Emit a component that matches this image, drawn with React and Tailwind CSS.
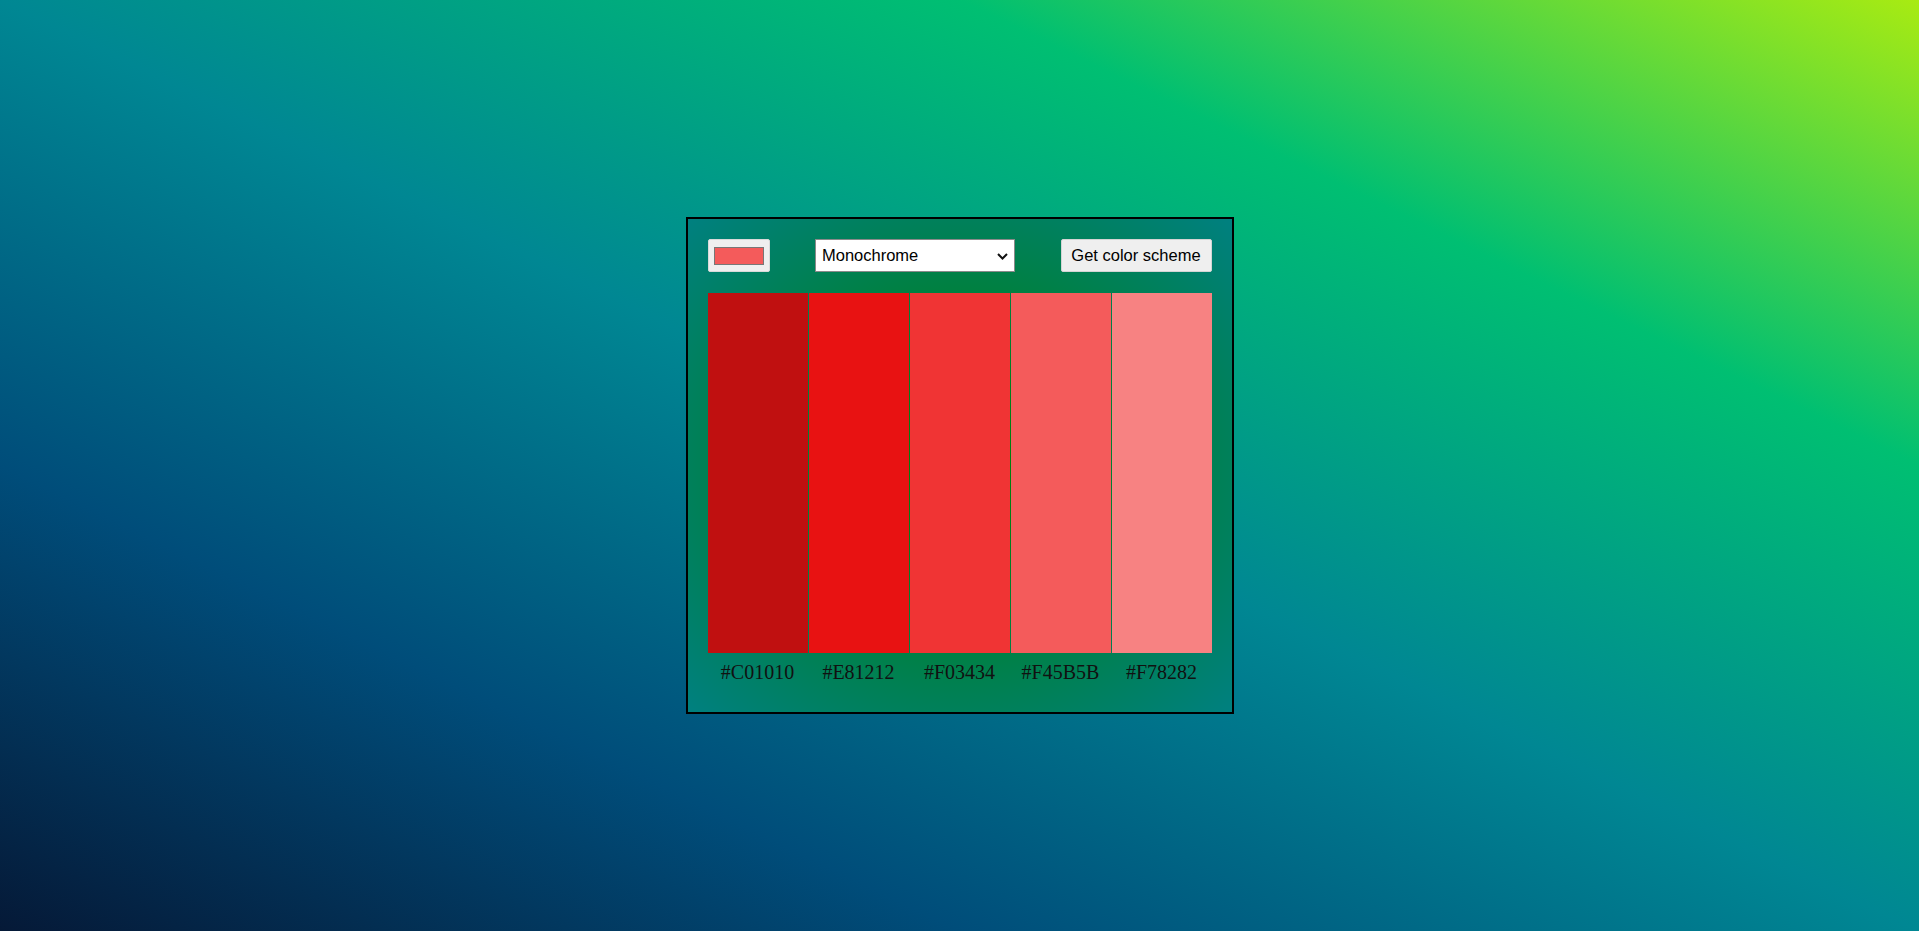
import React from "react";

const colors = ["#C01010", "#E81212", "#F03434", "#F45B5B", "#F78282"];

export default function App() {
  return (
    <div className="flex h-screen w-full items-center justify-center bg-[linear-gradient(to_right_top,#051937,#004d7a,#008793,#00bf72,#a8eb12)]">
      <div className="w-[548px] border-2 border-black bg-[radial-gradient(#008000,#008080)] p-5">
        <div className="flex h-[33px] items-center justify-between font-['Liberation_Sans',Arial,sans-serif] text-[16.5px] text-black">
          <div className="flex h-[33px] w-[62px] items-start rounded-[2px] border border-[#d9d9d9] bg-[#efefef] pl-[5px] pt-[7px]">
            <div className="h-[18px] w-[50px] border border-[#777777] bg-[#f45b5b]" />
          </div>
          <div className="relative h-[33px] w-[200px] border border-[#8a8a8a] bg-white">
            <div className="flex h-full items-center pl-[6px] leading-none">Monochrome</div>
            <svg
              className="absolute right-[6px] top-[13px]"
              width="11"
              height="7"
              viewBox="0 0 11 7"
              fill="none"
            >
              <polyline points="1,1 5.5,5.5 10,1" stroke="#111" strokeWidth="2" />
            </svg>
          </div>
          <button className="flex h-[33px] w-[151px] items-center justify-center rounded-[2px] border border-[#d4d4d4] bg-[#efefef] leading-none text-black">
            Get color scheme
          </button>
        </div>
        <div className="mt-[21px] flex gap-px">
          {colors.map((c) => (
            <div key={c} className="flex w-[100px] flex-col">
              <div className="h-[360px] w-full" style={{ backgroundColor: c }} />
              <p className="py-2 text-center font-['Liberation_Serif','Times_New_Roman',serif] text-[20px] leading-[23px] text-[#111]">
                {c}
              </p>
            </div>
          ))}
        </div>
      </div>
    </div>
  );
}
